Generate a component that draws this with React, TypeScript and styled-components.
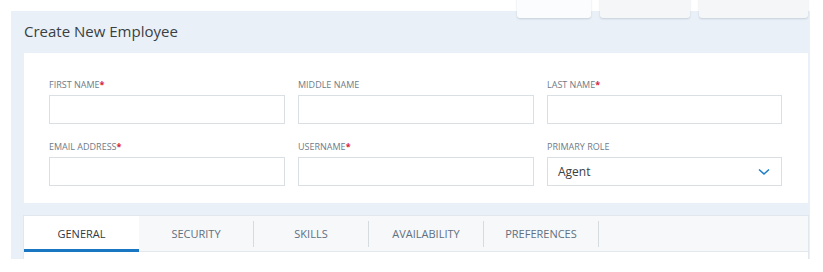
import React from "react";
import styled, { createGlobalStyle } from "styled-components";

const Global = createGlobalStyle`
  html, body { margin: 0; padding: 0; background: #ffffff; }
  body { font-family: "Open Sans", "Liberation Sans", sans-serif; }
  * { box-sizing: border-box; }
`;

const Page = styled.div`
  position: relative;
  width: 823px;
  height: 272px;
  padding: 11px 13px 0 11px;
  overflow: hidden;
`;

const TopActions = styled.div`
  position: absolute;
  top: -10px;
  left: 517px;
  display: flex;
  gap: 9px;
`;

const GhostButton = styled.div<{ $w: number; $bg: string }>`
  width: ${(p) => p.$w}px;
  height: 28px;
  background: ${(p) => p.$bg};
  border-radius: 3px;
  box-shadow: 0 1px 2px rgba(40, 60, 90, 0.18);
`;

const Panel = styled.div`
  background: #e9f0f7;
  height: 248px;
  padding: 0 2px 0 13px;
  overflow: hidden;
`;

const Title = styled.h1`
  margin: 0;
  height: 42px;
  display: flex;
  align-items: center;
  font-size: 15px;
  font-weight: 400;
  color: #3a3f44;
  padding-bottom: 2px;
`;

const Card = styled.div`
  background: #ffffff;
  padding: 26px 25px 17px 25px;
  display: grid;
  grid-template-columns: 236px 236px 235px;
  column-gap: 13px;
  row-gap: 17px;
`;

const Field = styled.div`
  display: flex;
  flex-direction: column;
  gap: 4px;
`;

const Label = styled.label`
  font-size: 9px;
  line-height: 12px;
  color: #6f7b88;
  text-transform: uppercase;
`;

const Req = styled.span`
  color: #d7263d;
  font-weight: 700;
`;

const Input = styled.div`
  height: 29px;
  border: 1px solid #dadfe4;
  background: #ffffff;
  display: flex;
  align-items: center;
  justify-content: space-between;
  padding: 0 11px 0 10px;
  font-size: 12px;
  color: #3b4046;
`;

const Tabs = styled.div`
  margin-top: 13px;
  background: #ffffff;
  box-shadow: 0 0 0 1px #e1e7ed;
  height: 60px;
`;

const TabBar = styled.div`
  display: flex;
  height: 36px;
  background: #f6f8fa;
  border-bottom: 1px solid #e3e8ed;
`;

const Tab = styled.div<{ $active?: boolean }>`
  width: ${(p) => (p.$active ? 115 : 114)}px;
  display: flex;
  align-items: center;
  justify-content: center;
  font-size: 11px;
  text-transform: uppercase;
  color: ${(p) => (p.$active ? "#33383d" : "#5f7080")};
  background: ${(p) => (p.$active ? "#ffffff" : "transparent")};
  border-bottom: 3px solid ${(p) => (p.$active ? "#1976c2" : "transparent")};
  padding-top: 2px;
  margin-bottom: -1px;
`;

const Sep = styled.div`
  width: 1px;
  height: 26px;
  margin-top: 5px;
  background: #d6dbe0;
`;

const Chevron = () => (
  <svg width="12" height="8" viewBox="0 0 12 8" fill="none">
    <path d="M1 1.5 L6 6 L11 1.5" stroke="#1e7fc6" strokeWidth="1.6" />
  </svg>
);

const fields = [
  { label: "First Name", req: true },
  { label: "Middle Name" },
  { label: "Last Name", req: true },
  { label: "Email Address", req: true },
  { label: "Username", req: true },
  { label: "Primary Role", value: "Agent", select: true },
];

const tabs = ["General", "Security", "Skills", "Availability", "Preferences"];

export default function App() {
  return (
    <>
      <Global />
      <Page>
        <Panel>
          <Title>Create New Employee</Title>
          <Card>
            {fields.map((f) => (
              <Field key={f.label}>
                <Label>
                  {f.label}
                  {f.req && <Req>*</Req>}
                </Label>
                <Input>
                  {f.value ?? ""}
                  {f.select && <Chevron />}
                </Input>
              </Field>
            ))}
          </Card>
          <Tabs>
            <TabBar>
              {tabs.map((t, i) => (
                <React.Fragment key={t}>
                  <Tab $active={i === 0}>{t}</Tab>
                  {i > 0 && <Sep />}
                </React.Fragment>
              ))}
            </TabBar>
          </Tabs>
        </Panel>
        <TopActions>
          <GhostButton $w={74} $bg="#fbfcfd" />
          <GhostButton $w={90} $bg="#f5f6f7" />
          <GhostButton $w={109} $bg="#f5f6f7" />
        </TopActions>
      </Page>
    </>
  );
}
